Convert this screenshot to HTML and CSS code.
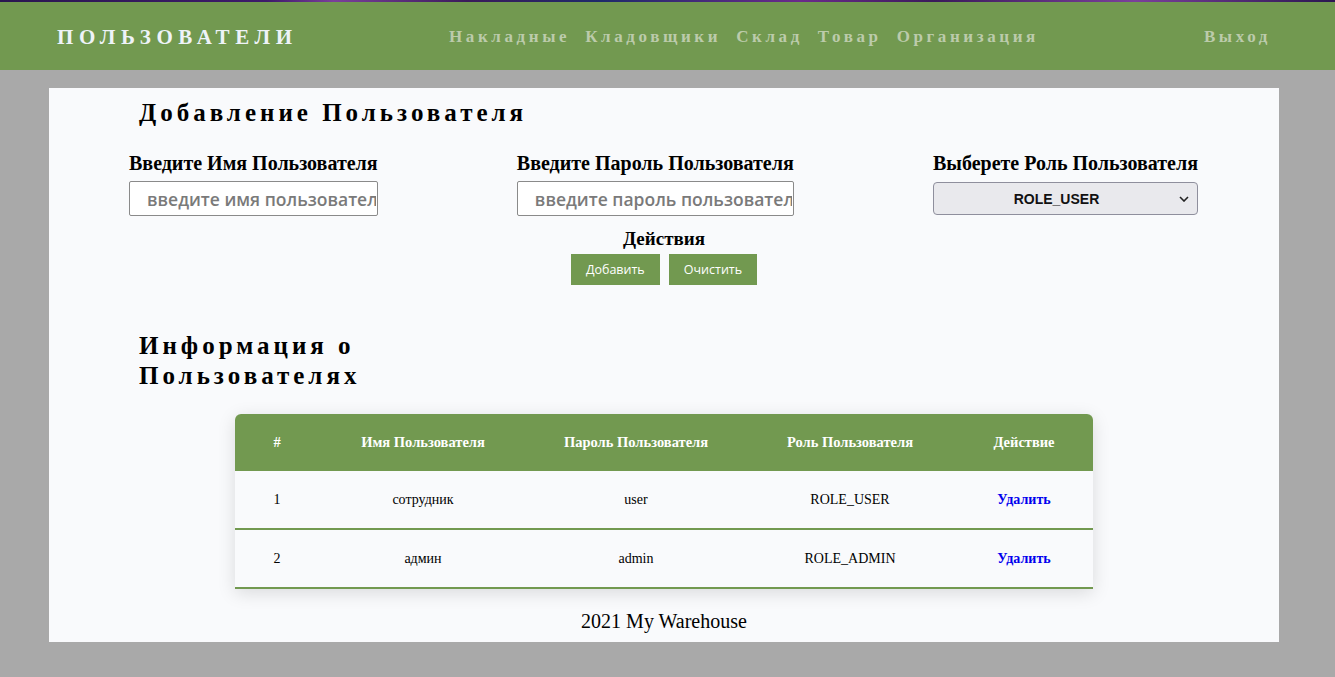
FILE: index.html
```html
<!DOCTYPE html>
<html lang="ru">
<head>
<meta charset="utf-8">
<title>Пользователи</title>
<link rel="stylesheet" href="styles.css">
</head>
<body>
<header class="topbar">
  <div class="topbar-strip"></div>
  <div class="topbar-inner">
    <div class="brand">ПОЛЬЗОВАТЕЛИ</div>
    <nav class="nav">
      <a href="#">Накладные</a>
      <a href="#">Кладовщики</a>
      <a href="#">Склад</a>
      <a href="#">Товар</a>
      <a href="#">Организация</a>
    </nav>
    <a class="logout" href="#">Выход</a>
  </div>
</header>
<main class="page">
  <h2 class="section-title">Добавление Пользователя</h2>
  <div class="form-row">
    <div class="field">
      <label class="field-label">Введите Имя Пользователя</label>
      <input class="text-input" type="text" placeholder="введите имя пользователя">
    </div>
    <div class="field">
      <label class="field-label">Введите Пароль Пользователя</label>
      <input class="text-input" type="text" placeholder="введите пароль пользователя">
    </div>
    <div class="field">
      <label class="field-label">Выберете Роль Пользователя</label>
      <div class="select-box"><span>ROLE_USER</span>
        <svg class="chev" width="10" height="6" viewBox="0 0 10 6"><path d="M1 1 L5 5 L9 1" fill="none" stroke="#222" stroke-width="1.6"/></svg>
      </div>
    </div>
  </div>
  <div class="actions">
    <div class="actions-label">Действия</div>
    <div class="actions-buttons">
      <button class="btn">Добавить</button>
      <button class="btn">Очистить</button>
    </div>
  </div>
  <h2 class="section-title narrow">Информация о Пользователях</h2>
  <div class="table-wrap">
    <table class="users">
      <colgroup>
        <col class="c1"><col class="c2"><col class="c3"><col class="c4"><col class="c5">
      </colgroup>
      <thead>
        <tr><th>#</th><th>Имя Пользователя</th><th>Пароль Пользователя</th><th>Роль Пользователя</th><th>Действие</th></tr>
      </thead>
      <tbody>
        <tr><td>1</td><td>сотрудник</td><td>user</td><td>ROLE_USER</td><td><a class="del" href="#">Удалить</a></td></tr>
        <tr><td>2</td><td>админ</td><td>admin</td><td>ROLE_ADMIN</td><td><a class="del" href="#">Удалить</a></td></tr>
      </tbody>
    </table>
  </div>
  <footer class="footer">2021 My Warehouse</footer>
</main>
</body>
</html>
```
FILE: styles.css
```css
html, body {
  margin: 0;
  padding: 0;
}
body {
  background: #a9a9a9;
  font-family: "Liberation Serif", "Times New Roman", serif;
  min-height: 677px;
}
.topbar {
  background: #729950;
  height: 70px;
}
.topbar-strip {
  height: 2px;
  background: linear-gradient(90deg, #2a1650 0%, #3d1a6a 20%, #7a3f9a 25%, #3a1a5a 35%, #1e2a6a 45%, #6a2a8a 60%, #3a1a5a 70%, #7a3f9a 85%, #2a1650 100%);
}
.topbar-inner {
  height: 68px;
  display: flex;
  align-items: center;
  padding: 2px 64px 0 57px;
  box-sizing: border-box;
}
.brand {
  color: #eef3f8;
  font-weight: bold;
  font-size: 21px;
  letter-spacing: 5.6px;
  width: 392px;
}
.nav {
  display: flex;
  gap: 15px;
  flex: 1;
}
.nav a, .logout {
  color: #bccbab;
  text-decoration: none;
  font-weight: bold;
  font-size: 17px;
  letter-spacing: 3.6px;
}
.page {
  margin: 18px 56px 0 49px;
  background: #f9fafc;
  padding: 10px 0 9px;
}
.section-title {
  margin: 0 0 0 90px;
  font-size: 25px;
  font-weight: bold;
  letter-spacing: 4px;
  line-height: 30px;
}
.section-title.narrow {
  width: 260px;
  margin-top: 46px;
}
.form-row {
  display: flex;
  justify-content: space-between;
  padding: 0 81px 0 80px;
  margin-top: 23px;
}
.field {
  display: flex;
  flex-direction: column;
}
.field-label {
  font-weight: bold;
  font-size: 20px;
  line-height: 24px;
}
.text-input {
  margin-top: 6px;
  width: 0;
  min-width: 100%;
  box-sizing: border-box;
  height: 35px;
  border: 1px solid #8a8a8a;
  border-radius: 2px;
  background: #fff;
  padding: 0 1px 0 17px;
  font-family: "Open Sans", "Noto Sans", sans-serif;
  font-weight: 600;
  font-size: 17.5px;
  text-align: center;
}
.text-input::placeholder {
  color: #7a7a7a;
}
.select-box {
  margin-top: 7px;
  height: 33px;
  box-sizing: border-box;
  border: 1px solid #8f8f9d;
  border-radius: 4px;
  background: #e9e9ed;
  position: relative;
  display: flex;
  align-items: center;
  justify-content: center;
  padding-right: 18px;
  font-family: "Liberation Sans", Arial, sans-serif;
  font-weight: bold;
  font-size: 14px;
  color: #111;
}
.chev {
  position: absolute;
  right: 8px;
  top: 13px;
}
.actions {
  display: flex;
  flex-direction: column;
  align-items: center;
  margin-top: 12px;
}
.actions-label {
  font-weight: bold;
  font-size: 19px;
  line-height: 22px;
}
.actions-buttons {
  display: flex;
  gap: 9px;
  margin-top: 4px;
}
.btn {
  background: #729950;
  color: #fff;
  border: none;
  height: 31px;
  padding: 0 15px;
  font-family: "Open Sans", "Noto Sans", sans-serif;
  font-size: 12.5px;
}
.table-wrap {
  width: 858px;
  margin: 23px auto 0;
  box-shadow: 0 4px 18px rgba(0, 0, 0, 0.13);
  border-radius: 6px 6px 0 0;
}
.users {
  width: 858px;
  border-collapse: collapse;
  table-layout: fixed;
}
.c1 { width: 84px; }
.c2 { width: 208px; }
.c3 { width: 218px; }
.c4 { width: 210px; }
.c5 { width: 138px; }
.users thead tr {
  background: #729950;
}
.users th {
  height: 57px;
  color: #fff;
  font-size: 14.5px;
  font-weight: bold;
  text-align: center;
  padding: 0;
}
.users th:first-child { border-top-left-radius: 6px; }
.users th:last-child { border-top-right-radius: 6px; }
.users td {
  height: 57px;
  padding: 0;
  text-align: center;
  font-size: 14px;
  border-bottom: 2px solid #729950;
  background: #f9fafc;
}
.del {
  color: #0000ee;
  font-weight: bold;
  text-decoration: none;
}
.footer {
  text-align: center;
  font-size: 20px;
  margin-top: 20px;
  line-height: 24px;
}
```
